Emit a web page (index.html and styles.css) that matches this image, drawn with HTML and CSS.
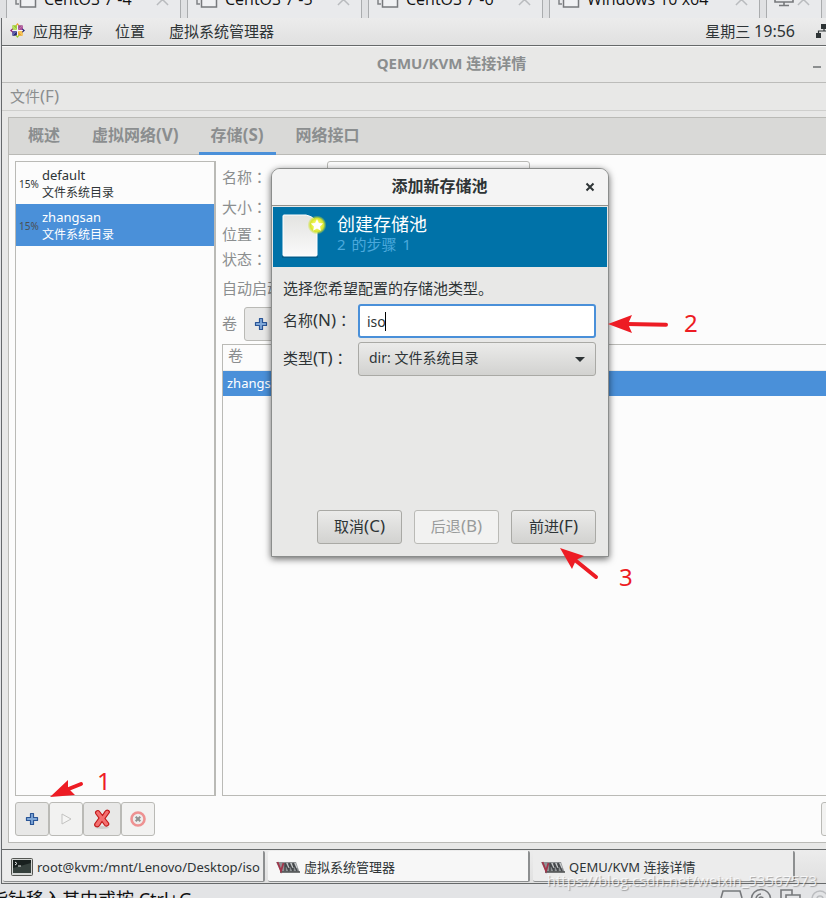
FILE: index.html
```html
<!DOCTYPE html>
<html lang="zh-CN">
<head>
<meta charset="utf-8">
<title>QEMU/KVM 连接详情</title>
<link rel="stylesheet" href="styles.css">
</head>
<body>
<svg class="defs" aria-hidden="true">
  <symbol id="vmtab" viewBox="0 0 24 20"><path d="M5 12H2V8" fill="none" stroke="#808285" stroke-width="1.500"/><rect x="6.500" y="0" width="15" height="15" fill="#f0f1f3" stroke="#77797c" stroke-width="1.500"/></symbol>
  <symbol id="tabx" viewBox="0 0 14 14"><path d="M1 1L13 13M13 1L1 13" stroke="#b9bbbe" stroke-width="1.600"/></symbol>
  <symbol id="plus" viewBox="0 0 14 14"><path d="M5.500 1.500h3v4h4v3h-4v4h-3v-4h-4v-3h4z" fill="#7fa8d9" stroke="#2a5596" stroke-width="1.200" stroke-linejoin="round"/></symbol>
  <symbol id="vmm" viewBox="0 0 24 14"><path d="M0 2h20l3.500 10H5z" fill="#8f9295"/><path d="M4 12h20" stroke="#4a4c4e" stroke-width="1.500"/><path d="M1.500 2l3.500 9 2.500-8" fill="none" stroke="#a3344a" stroke-width="1.800"/><path d="M9 11l0-8 4 8V3l4 8V3l4 8" fill="none" stroke="#45484b" stroke-width="1.500"/><path d="M11 3l2 5M15 3l2 5M19 3l2 5" stroke="#d0d2d3" stroke-width="1"/></symbol>
</svg>

<nav class="vmtabs">
  <a class="vmtab" href="#"><svg class="vmicon"><use href="#vmtab"/></svg><span>CentOS 7 -4</span><svg class="x"><use href="#tabx"/></svg></a>
  <a class="vmtab" href="#"><svg class="vmicon"><use href="#vmtab"/></svg><span>CentOS 7 -5</span><svg class="x"><use href="#tabx"/></svg></a>
  <a class="vmtab" href="#"><svg class="vmicon"><use href="#vmtab"/></svg><span>CentOS 7 -6</span><svg class="x"><use href="#tabx"/></svg></a>
  <a class="vmtab wide" href="#"><svg class="vmicon"><use href="#vmtab"/></svg><span>Windows 10 x64</span><svg class="x"><use href="#tabx"/></svg></a>
  <a class="vmtab mini" href="#" aria-label="PC"><svg class="pc" viewBox="0 0 20 20"><path d="M1 0V11H19V0M10 11v4M5 14.500h10" fill="none" stroke="#77797c" stroke-width="1.600"/></svg><svg class="x"><use href="#tabx"/></svg></a>
</nav>

<div class="guest">
  <header class="panel">
    <svg class="apps" viewBox="0 0 14 14"><path d="M7 0l2 2.500H5z" fill="#f0a030"/><path d="M2 2h4.500v4.500z" fill="#9ccd2a"/><path d="M2 2v4.500h4.500z" fill="#b5dc5a"/><path d="M12 2H7.500v4.500z" fill="#a14f8c"/><path d="M12 2v4.500H7.500z" fill="#b0509a"/><path d="M2 12h4.500V7.500z" fill="#262577"/><path d="M2 12V7.500h4.500z" fill="#5b5aa8"/><path d="M12 12H7.500V7.500z" fill="#efa724"/><path d="M12 12V7.500H7.500z" fill="#f6c355"/><path d="M0 7l2.500-2v4z" fill="#932279"/><path d="M14 7l-2.500-2v4z" fill="#262577"/><path d="M7 14l2-2.500H5z" fill="#9ccd2a"/><path d="M7 2v10M2 7h10" stroke="#f4f4f4"/></svg>
    <a href="#">应用程序</a><a href="#">位置</a><a href="#">虚拟系统管理器</a>
    <time>星期三 <span>19:56</span></time>
    <svg class="net" viewBox="0 0 16 16"><path d="M5 1h6v5H5zM0 10h5v5H0zM11 10h5v5h-5z" fill="#2e3436"/><path d="M8 5v3M2.500 11V8h11v3" fill="none" stroke="#2e3436" stroke-width="1.200"/></svg>
  </header>

  <section class="window">
    <div class="titlebar"><h1>QEMU/KVM 连接详情</h1><button class="minimize" aria-label="最小化"></button></div>
    <div class="menubar"><a href="#">文件<span class="key">(F)</span></a></div>

    <div class="notebook">
      <nav class="pages"><a href="#">概述</a><a href="#">虚拟网络<span class="key">(V)</span></a><a class="active" href="#">存储<span class="key">(S)</span></a><a href="#">网络接口</a></nav>
      <div class="storage">
        <aside class="pools">
          <ul class="poollist">
            <li><span class="pct">15%</span><div><b>default</b><span>文件系统目录</span></div></li>
            <li class="selected"><span class="pct">15%</span><div><b>zhangsan</b><span>文件系统目录</span></div></li>
          </ul>
          <div class="tools">
            <button aria-label="添加"><svg class="i14"><use href="#plus"/></svg></button>
            <button class="off" aria-label="启动" disabled><svg class="i14" viewBox="0 0 14 14"><path d="M3 2l9 5-9 5z" fill="#f5f5f4" stroke="#c3c3c1"/></svg></button>
            <button class="big" aria-label="停止"><svg class="i20" viewBox="0 0 20 20"><ellipse cx="10" cy="18.500" rx="7" ry="1.500" fill="#cfcfcd"/><path d="M4 2.500Q6 .5 7.500 2.500L10.500 6.500 13 2.500Q14.500 .5 16.500 1.500 18 2.500 17 4L13 9.500 16.500 14Q17.500 16 15 17 13.500 17.500 12.500 16L10 12.500 7.500 16.500Q6 18.500 4 17.500 2 16.500 3 14.500L7 9 4 5Q3 3.500 4 2.500z" fill="#f47070" stroke="#c01818" stroke-width="1.200" stroke-linejoin="round"/></svg></button>
            <button class="off" aria-label="删除" disabled><svg class="i16" viewBox="0 0 16 16"><circle cx="8" cy="8" r="6.500" fill="#ededec" stroke="#ee9292" stroke-width="2.600"/><path d="M5.700 5.700l4.600 4.600M10.300 5.700l-4.600 4.600" stroke="#8f9190" stroke-width="2"/></svg></button>
          </div>
        </aside>

        <div class="details">
          <form class="fields">
            <label for="pool">名称<span class="colon" lang="zh-TW">：</span></label><input id="pool" type="text">
            <span>大小<span class="colon" lang="zh-TW">：</span></span><i></i>
            <span>位置<span class="colon" lang="zh-TW">：</span></span><i></i>
            <span>状态<span class="colon" lang="zh-TW">：</span></span><i></i>
            <span>自动启动<span class="colon" lang="zh-TW">：</span></span><i></i>
          </form>
          <div class="volbar"><b>卷</b><button aria-label="添加卷"><svg class="i14"><use href="#plus"/></svg></button></div>
          <div class="volumes">
            <table><thead><tr><th>卷</th></tr></thead><tbody><tr><td>zhangsan.qcow2</td></tr></tbody></table>
          </div>
          <div class="apply"><button aria-label="应用"></button></div>
        </div>
      </div>
    </div>
  </section>

  <footer class="taskbar">
    <button><svg class="term" viewBox="0 0 22 19"><rect x=".5" y=".5" width="21" height="17" rx="1" fill="#d5d7d5" stroke="#555753"/><rect x="2" y="2" width="18" height="13" fill="#18201e"/><path d="M2 10l18-5v10H2z" fill="#35403c"/><path d="M4 4l2 1.500L4 7M7 8h3" fill="none" stroke="#e6e8e6"/></svg><span>root@kvm:/mnt/Lenovo/Desktop/iso</span></button>
    <button class="current"><svg class="vmm"><use href="#vmm"/></svg><span>虚拟系统管理器</span></button>
    <button><svg class="vmm"><use href="#vmm"/></svg><span>QEMU/KVM 连接详情</span></button>
  </footer>

  <section class="dialog" role="dialog" aria-labelledby="dlg">
    <div class="dlghead"><h2 id="dlg">添加新存储池</h2><button class="close" aria-label="关闭"><svg viewBox="0 0 10 10"><path d="M1.500 1.500l7 7M8.500 1.500l-7 7" stroke="#2e3436" stroke-width="2"/></svg></button></div>
    <div class="banner">
      <svg class="page" viewBox="0 0 48 48"><defs><linearGradient id="pg" x2="0" y2="1"><stop stop-color="#e3e3e1"/><stop offset="1" stop-color="#fafafa"/></linearGradient><radialGradient id="glow"><stop offset=".4" stop-color="#f2f55a"/><stop offset=".7" stop-color="#d5e52e"/><stop offset="1" stop-color="#c9dd2e" stop-opacity="0"/></radialGradient></defs><path d="M4 43.500h36" stroke="#064a70" stroke-width="3" opacity=".5"/><path d="M6 2h22q9 2 11 9v31q0 1-1 1H6q-1 0-1-1V3q0-1 1-1z" fill="url(#pg)" stroke="#fff"/><circle cx="39" cy="12" r="9.500" fill="url(#glow)"/><path d="M39 6l1.900 4 4.300.5-3.200 3 .9 4.300-3.900-2.200-3.900 2.200.9-4.300-3.200-3 4.300-.5z" fill="#fff"/></svg>
      <div><h3>创建存储池</h3><p><span>2</span><span>的步骤</span><span>1</span></p></div>
    </div>
    <form class="dlgbody">
      <p>选择您希望配置的存储池类型。</p>
      <div class="row"><label for="name">名称<span class="key">(N)</span><span class="colon" lang="zh-TW">：</span></label><div class="entry"><input id="name" type="text" value="iso"><span class="caret"></span></div></div>
      <div class="row"><label for="type">类型<span class="key">(T)</span><span class="colon" lang="zh-TW">：</span></label><div class="combo"><select id="type"><option>dir: 文件系统目录</option></select></div></div>
      <div class="actions"><button type="button">取消<span class="key">(C)</span></button><button type="button" disabled>后退<span class="key">(B)</span></button><button type="button">前进<span class="key">(F)</span></button></div>
    </form>
  </section>
</div>

<footer class="host">
  <span>指针移入其中或按 Ctrl+G</span>
  <svg class="devices" viewBox="0 0 108 14"><g fill="none" stroke="#77797c" stroke-width="1.600"><path d="M3 14L5 7H22L24 14"/><circle cx="43" cy="15" r="9.500"/><path d="M38 15a5 5 0 0 1 5-5"/><circle cx="43" cy="15" r="2"/><path d="M63 14V6h11v5M68 14v-3h14v4"/></g><g fill="none" stroke="#babcbf" stroke-width="1.500"><circle cx="102" cy="15" r="8"/><circle cx="102" cy="15" r="3"/></g></svg>
</footer>

<svg class="arrows" viewBox="0 0 826 898" aria-hidden="true"><g fill="#ed1c24" stroke="#ed1c24"><path d="M608 324l24-9-4 9 4 9z" stroke="none"/><path d="M627 324l39 .8" stroke-width="4" stroke-linecap="round"/><path d="M560 548l24 8-8 4-4 9z" stroke="none"/><path d="M575 560l21 17" stroke-width="4" stroke-linecap="round"/><path d="M50 797l18-17 0 8 7 7z" stroke="none"/><path d="M66 790l15-6" stroke-width="4" stroke-linecap="round"/></g></svg>
<span class="num one">1</span><span class="num two">2</span><span class="num three">3</span>
<span class="watermark">https://blog.csdn.net/weixin_53567573</span>
</body>
</html>
```
FILE: styles.css
```css
* { box-sizing: border-box; }
html { overflow: hidden; }
body {
  margin: 0; height: 100vh; min-height: 640px; position: relative; overflow: hidden;
  display: flex; flex-direction: column; background: #e3e4e6; color: #2e3436;
  font: 15px/20px "Noto Sans", "Noto Sans CJK SC", sans-serif;
}
a { color: inherit; text-decoration: none; }
h1, h2, h3, p, ul { margin: 0; padding: 0; }
button, input, select { font: inherit; color: inherit; margin: 0; }
svg { flex: none; display: block; }
.defs { position: absolute; width: 0; height: 0; }
.key { font-size: 17px; line-height: 16px; }
.colon { font-family: "Noto Sans CJK TC", sans-serif; line-height: 16px; }

.vmtabs { flex: none; height: 18px; overflow: hidden; display: flex; align-items: flex-end; gap: 6px; padding-left: 6px; background: #e0e1e3; }
.vmtab { flex: none; width: 175px; height: 38px; display: flex; align-items: center; padding: 0 11px 0 7px; background: #e9eaec; border: solid #aaacae; border-width: 0 1px; font: 16px/24px "Open Sans", sans-serif; color: #111; }
.vmtab.wide { width: 211px; }
.vmtab.mini { width: 56px; }
.vmtab .x { width: 13px; height: 13px; margin-left: auto; }
.vmicon { width: 24px; height: 20px; margin: 6px 6px 0 0; }
.pc { width: 20px; height: 20px; margin-top: 4px; }

.guest { flex: 1; min-height: 0; position: relative; display: flex; flex-direction: column; margin-left: 1px; border-left: 1px solid #66696c; background: #e8e8e7; }
.panel { flex: none; height: 28px; display: flex; align-items: center; gap: 22px; padding: 0 0 2px 8px; overflow: hidden; background: linear-gradient(#ececec, #e0e0e0); border-bottom: 1px solid #66696a; }
.panel a:nth-of-type(3) { margin-left: 2px; }
.apps { width: 15px; height: 15px; margin-right: -14px; }
.panel time { margin-left: auto; }
.panel time span { font-size: 16px; }
.net { width: 16px; height: 16px; margin: 0 -6px 0 -1px; }

.window { flex: 1; min-height: 0; display: flex; flex-direction: column; overflow: hidden; color: #8b8e8f; border-top: 1px solid #fafafa; }
.titlebar { flex: none; height: 36px; display: flex; align-items: center; padding-bottom: 3px; border-bottom: 1px solid #bcbcba; }
.titlebar h1 { flex: 1; padding-left: 88px; text-align: center; font-size: 15px; line-height: 20px; }
.minimize { width: 8px; height: 2px; margin: 8px 5px 0 0; padding: 0; border: 0; background: #8b8e8f; }
.menubar { flex: none; height: 28px; padding: 3px 8px; border-bottom: 1px solid #cfcfcd; }
.notebook { flex: 1; min-height: 0; display: flex; flex-direction: column; margin: 6px 0 6px 6px; border: solid #babab6; border-width: 1px 0 1px 1px; background: #fcfcfc; }
.pages { flex: none; height: 37px; display: flex; gap: 8px; padding-left: 7px; background: #d9d9d7; border-bottom: 1px solid #babab6; font-weight: 700; font-size: 16px; }
.pages a { padding: 7px 12px; height: 37px; }
.pages .active { border-bottom: 3px solid #4a90d9; }
.storage { flex: 1; min-height: 0; display: flex; gap: 6px; padding: 6px 0 6px 6px; }
.pools { flex: none; width: 201px; display: flex; flex-direction: column; gap: 6px; }
.poollist { flex: 1; list-style: none; border: 1px solid #babab6; border-right-width: 2px; color: #2e3436; }
.poollist li { height: 42px; display: flex; align-items: center; gap: 3px; padding: 2px 0 0 3px; }
.poollist div { display: flex; flex-direction: column; }
.poollist b { font-weight: 400; font-size: 13px; line-height: 17px; }
.poollist div span { font-size: 12px; line-height: 17px; }
.pct { width: 20px; font-size: 10px; white-space: nowrap; }
.poollist .selected { background: #4a90d9; color: #fff; }
.selected .pct { color: #4a4f55; }
.tools { display: flex; }
.tools button { width: 34px; height: 34px; display: grid; place-items: center; padding: 0; border: 1px solid #babab6; border-radius: 3px; background: #e8e8e7; }
.tools .off { background: #f2f2f1; }
.tools .big { width: 38px; }
.i14 { width: 14px; height: 14px; }
.i16 { width: 16px; height: 16px; }
.i20 { width: 20px; height: 20px; }

.details { flex: 1; min-width: 0; display: flex; flex-direction: column; }
.fields { display: grid; grid-template-columns: 105px 203px; grid-template-rows: 31px 30px 24px 26px 31px; align-items: center; }
.fields input { width: 203px; height: 31px; border: 1px solid #babab6; border-radius: 3px; background: #fcfcfc; }
.volbar { display: flex; align-items: center; gap: 7px; height: 34px; margin: 4px 0 3px; }
.volbar b { font-weight: 400; padding-bottom: 2px; }
.volbar button { width: 34px; height: 34px; display: grid; place-items: center; padding: 0; border: 1px solid #babab6; border-radius: 3px; background: #e8e8e7; }
.volumes { flex: 1; border: solid #babab6; border-width: 1px 0 1px 1px; }
.volumes table { width: 100%; border-collapse: collapse; }
.volumes th { height: 25px; padding: 0 5px 4px; text-align: left; font-weight: 400; line-height: 20px; border-bottom: 1px solid #ededeb; }
.volumes td { height: 26px; padding: 0 4px; background: #4a90d9; color: #fff; font-size: 13px; }
.apply { display: flex; justify-content: flex-end; height: 40px; padding-top: 6px; overflow: hidden; }
.apply button { width: 34px; height: 34px; flex: none; margin-right: -29px; border: 1px solid #babab6; border-radius: 3px; background: #f2f2f1; }

.taskbar { flex: none; height: 35px; display: flex; gap: 3px; padding: 1px 31px 1px 1px; border: solid #66696a; border-width: 1px 0; background: linear-gradient(#ececec, #e0e0e0); }
.taskbar button { flex: 1; min-width: 0; display: flex; align-items: center; gap: 4px; padding: 2px 3px 0 8px; border: solid #8d8f90; border-width: 0 2px 1px 0; border-radius: 2px; background: #ececec; font-size: 13px; white-space: nowrap; }
.taskbar .current { background: #f7f7f7; }
.term { width: 22px; height: 19px; }
.vmm { width: 24px; height: 14px; }

.dialog { position: absolute; left: 269px; top: 150px; width: 338px; height: 389px; display: flex; flex-direction: column; border: 1px solid #8b8d8c; border-radius: 9px 9px 0 0; background: #e8e8e7; box-shadow: 0 2px 7px rgba(0, 0, 0, .6); }
.dlghead { flex: none; height: 37px; display: flex; align-items: center; padding: 0 13px 1px 0; border-radius: 8px 8px 0 0; border-bottom: 1px solid #91918c; background: #f4f4f4; }
.dlghead h2 { flex: 1; padding: 0 0 2px 22px; text-align: center; font-size: 16px; line-height: 20px; }
.close { padding: 0; border: 0; background: none; }
.close svg { width: 10px; height: 10px; }
.banner { flex: none; height: 60px; display: flex; gap: 11px; margin: 1px 1px 0; padding: 6px 5px; background: #0072a8; }
.page { width: 48px; height: 48px; }
.banner h3 { font-size: 18px; line-height: 22px; font-weight: 400; color: #fff; }
.banner p { display: flex; gap: 6px; font-size: 15px; line-height: 18px; color: #4ba9dc; }
.dlgbody { flex: 1; display: flex; flex-direction: column; padding: 11px 12px 12px 11px; }
.dlgbody p { margin-bottom: 6px; }
.row { display: flex; align-items: center; margin-bottom: 4px; }
.row label { width: 75px; padding-bottom: 2px; white-space: nowrap; }
.entry, .combo { position: relative; flex: 1; display: flex; }
.entry input { width: 100%; height: 34px; padding: 0 7px; border: 2px solid #4a90d9; border-radius: 3px; background: #fff; font-size: 14px; }
.caret { position: absolute; left: 27px; top: 8px; width: 1px; height: 19px; background: #000; }
.combo select { width: 100%; height: 34px; padding: 0 10px 2px; appearance: none; border: 1px solid #a9a9a5; border-radius: 3px; font-size: 14px; background: linear-gradient(#ebebea, #d2d2d0); }
.combo::after { content: ""; position: absolute; right: 11px; top: 15px; border: solid transparent; border-width: 5px 5px 0; border-top-color: #2e3436; pointer-events: none; }
.actions { display: flex; justify-content: flex-end; gap: 12px; margin-top: auto; }
.actions button { width: 85px; height: 34px; padding: 0 0 2px; border: 1px solid #a9a9a5; border-radius: 3px; background: linear-gradient(#ebebea, #d2d2d0); }
.actions button:disabled { background: #f2f2f1; color: #999b9b; border-color: #babab6; }

.host { flex: none; height: 14px; overflow: hidden; display: flex; justify-content: space-between; font-size: 18px; line-height: 24px; color: #111; white-space: nowrap; }
.host span { margin-left: -10px; padding-top: 3px; }
.devices { width: 108px; height: 14px; }

.arrows { position: absolute; left: 0; top: 0; width: 826px; height: 898px; pointer-events: none; }
.num { position: absolute; color: #ed1c24; font: 24px/28px "Noto Sans", sans-serif; }
.one { left: 97px; top: 767px; }
.two { left: 684px; top: 309px; }
.three { left: 619px; top: 563px; }
.watermark { position: absolute; right: 9px; bottom: 8px; font: 15px/20px "Open Sans", sans-serif; color: rgba(255, 255, 255, .75); text-shadow: 1px 1px 1px rgba(90, 90, 90, .5); }
```
